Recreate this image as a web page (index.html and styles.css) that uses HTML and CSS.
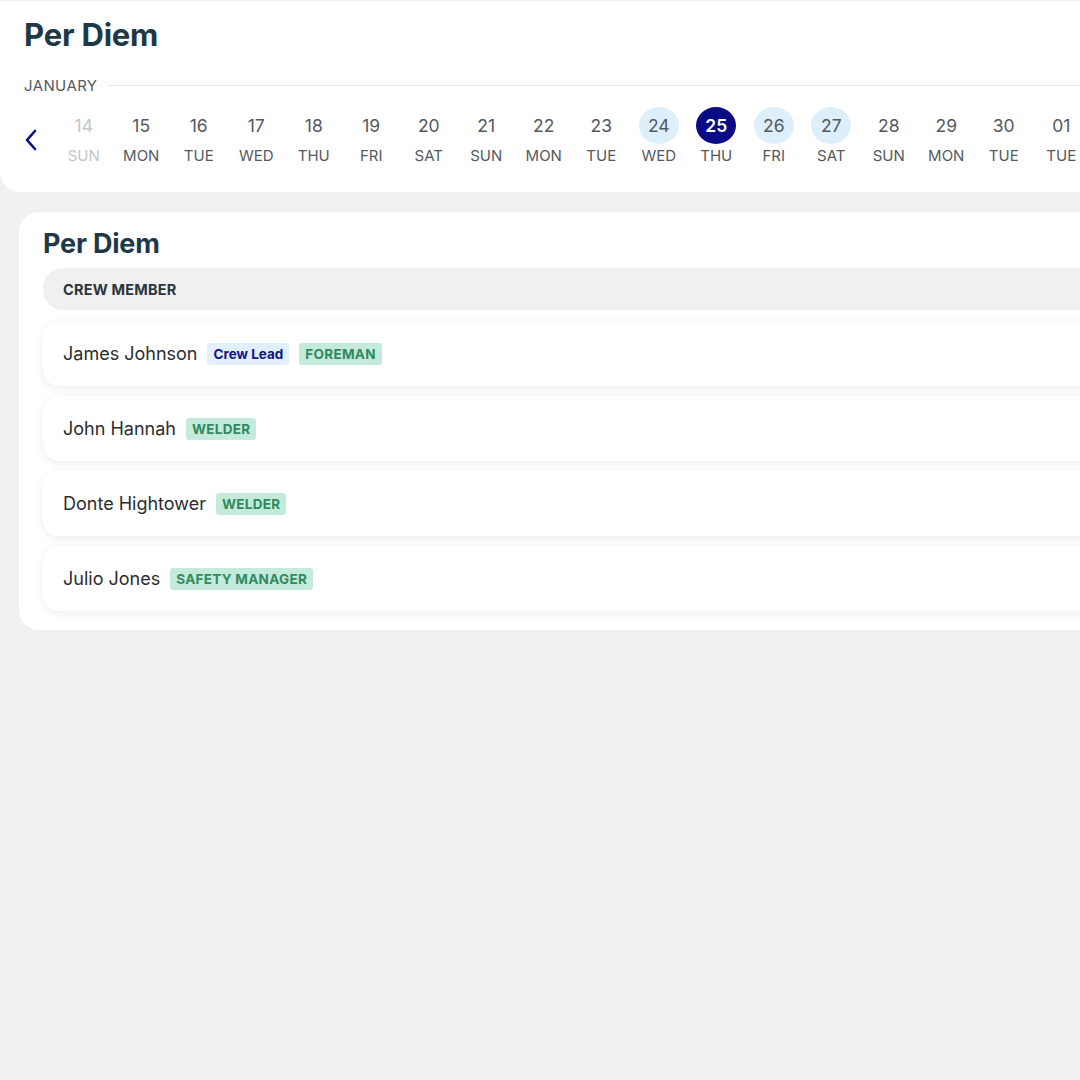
FILE: index.html
```html
<!DOCTYPE html>
<html lang="en">
<head>
    <meta charset="UTF-8" />
    <meta name="viewport" content="width=device-width, initial-scale=1.0"/>
    <title>Per Diem</title>
    <link rel="stylesheet" href="styles.css">
</head>
<body>
<div class="page">
    <section class="date-card">
        <h1>Per Diem</h1>
        <div class="month">
            <span>JANUARY</span>
            <div class="month-line"></div>
        </div>
        <div class="date-strip">
            <button class="prev" aria-label="Previous">
                <svg width="14" height="22" viewBox="0 0 14 22">
                    <path d="M11 2 L3 11 L11 20" fill="none" stroke="#0b0b86" stroke-width="2.6" stroke-linecap="round" stroke-linejoin="round"/>
                </svg>
            </button>
            <div class="days">
                <div class="day faded"><span class="num">14</span><span class="name">SUN</span></div>
                <div class="day"><span class="num">15</span><span class="name">MON</span></div>
                <div class="day"><span class="num">16</span><span class="name">TUE</span></div>
                <div class="day"><span class="num">17</span><span class="name">WED</span></div>
                <div class="day"><span class="num">18</span><span class="name">THU</span></div>
                <div class="day"><span class="num">19</span><span class="name">FRI</span></div>
                <div class="day"><span class="num">20</span><span class="name">SAT</span></div>
                <div class="day"><span class="num">21</span><span class="name">SUN</span></div>
                <div class="day"><span class="num">22</span><span class="name">MON</span></div>
                <div class="day"><span class="num">23</span><span class="name">TUE</span></div>
                <div class="day week"><span class="num">24</span><span class="name">WED</span></div>
                <div class="day active"><span class="num">25</span><span class="name">THU</span></div>
                <div class="day week"><span class="num">26</span><span class="name">FRI</span></div>
                <div class="day week"><span class="num">27</span><span class="name">SAT</span></div>
                <div class="day"><span class="num">28</span><span class="name">SUN</span></div>
                <div class="day"><span class="num">29</span><span class="name">MON</span></div>
                <div class="day"><span class="num">30</span><span class="name">TUE</span></div>
                <div class="day"><span class="num">01</span><span class="name">TUE</span></div>
            </div>
        </div>
    </section>

    <section class="crew-card">
        <h2>Per Diem</h2>
        <div class="crew-head">CREW MEMBER</div>
        <div class="crew-list">
            <div class="crew-row">
                <span class="crew-name">James Johnson</span>
                <span class="tag lead">Crew Lead</span>
                <span class="tag role">FOREMAN</span>
            </div>
            <div class="crew-row">
                <span class="crew-name">John Hannah</span>
                <span class="tag role">WELDER</span>
            </div>
            <div class="crew-row">
                <span class="crew-name">Donte Hightower</span>
                <span class="tag role">WELDER</span>
            </div>
            <div class="crew-row">
                <span class="crew-name">Julio Jones</span>
                <span class="tag role">SAFETY MANAGER</span>
            </div>
        </div>
    </section>
</div>
</body>
</html>
```

FILE: styles.css
```css
html, body {
  margin: 0;
  height: 100%;
  overflow: hidden;
}

body {
  font-family: "Inter", "Noto Sans", sans-serif;
  background: #f0f0f0;
  color: #2b2f33;
}

.page {
  width: 1260px;
  padding-top: 1px;
}

/* top date picker card */
.date-card {
  background: #fff;
  border-radius: 0 0 20px 20px;
  padding: 15px 0 0 24px;
  height: 191px;
  box-sizing: border-box;
}

.date-card h1 {
  margin: 0;
  font-size: 31px;
  font-weight: 700;
  color: #1e3846;
  letter-spacing: -0.2px;
}

.month {
  display: flex;
  align-items: center;
  gap: 11px;
  margin-top: 23px;
}

.month span {
  font-size: 15px;
  color: #555a5f;
  letter-spacing: 0.4px;
}

.month-line {
  flex: 1;
  height: 1px;
  background: #e6e6e6;
}

.date-strip {
  display: flex;
  align-items: center;
  margin-top: 12px;
}

.prev {
  border: none;
  background: none;
  padding: 0;
  width: 31px;
  display: flex;
  align-items: center;
  cursor: pointer;
  margin-top: 8px;
}

.days {
  display: flex;
}

.day {
  width: 57.5px;
  display: flex;
  flex-direction: column;
  align-items: center;
  gap: 2px;
  color: #54595e;
}

.day .num {
  width: 40px;
  height: 37px;
  border-radius: 50%;
  display: flex;
  align-items: center;
  justify-content: center;
  font-size: 17.5px;
}

.day .name {
  font-size: 15px;
}

.day.faded {
  color: #c3c5c7;
}

.day.week .num {
  background: #ddeffb;
}

.day.active .num {
  background: #0b0b86;
  color: #fff;
  font-weight: 600;
}

/* crew list card */
.crew-card {
  background: #fff;
  margin: 20px 0 0 19px;
  border-radius: 20px;
  padding: 15px 0 19px 24px;
}

.crew-card h2 {
  margin: 0 0 8px;
  font-size: 27px;
  font-weight: 700;
  color: #1e3846;
  letter-spacing: -0.2px;
}

.crew-head {
  background: #f0f0f0;
  border-radius: 20px;
  height: 42px;
  display: flex;
  align-items: center;
  padding-left: 20px;
  font-size: 14.5px;
  font-weight: 700;
  color: #2a363d;
  letter-spacing: 0.2px;
}

.crew-list {
  display: flex;
  flex-direction: column;
  gap: 10px;
  margin-top: 11px;
}

.crew-row {
  background: #fff;
  height: 65px;
  border-radius: 16px;
  box-shadow: 0 2px 10px rgba(0,0,0,0.08);
  display: flex;
  align-items: center;
  padding-left: 20px;
  gap: 10px;
}

.crew-name {
  font-size: 18px;
  color: #2a2d30;
}

.tag {
  font-size: 13.5px;
  font-weight: 700;
  padding: 3px 6px;
  border-radius: 3px;
  line-height: 16px;
}

.tag.lead {
  background: #e1f0fc;
  color: #13138a;
}

.tag.role {
  background: #c4eadb;
  color: #2f8a60;
  letter-spacing: 0.3px;
}
```
